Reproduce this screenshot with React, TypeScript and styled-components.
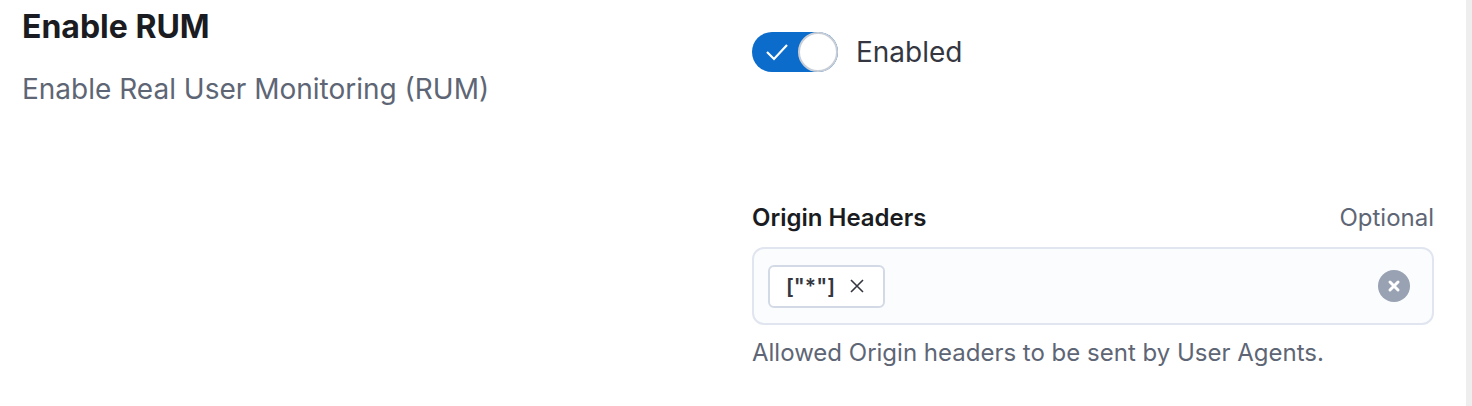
import React from 'react';
import styled, { createGlobalStyle } from 'styled-components';

const GlobalStyle = createGlobalStyle`
  html, body {
    margin: 0;
    padding: 0;
    background: #ffffff;
  }
  body {
    font-family: Inter, "Noto Sans", "Liberation Sans", sans-serif;
    -webkit-font-smoothing: antialiased;
  }
`;

const Page = styled.div`
  width: 1472px;
  height: 406px;
  box-sizing: border-box;
  border-right: 6px solid #eeeeee;
  padding: 0 32px 0 22px;
  display: grid;
  grid-template-columns: 730px 1fr;
`;

const Description = styled.div`
  display: flex;
  flex-direction: column;
  padding-top: 7px;
`;

const Title = styled.h3`
  margin: 0;
  font-size: 32px;
  line-height: 40px;
  font-weight: 700;
  color: #1a1c21;
`;

const Subtitle = styled.p`
  margin: 24px 0 0;
  font-size: 28px;
  line-height: 36px;
  font-weight: 400;
  color: #5e6675;
`;

const Fields = styled.div`
  display: flex;
  flex-direction: column;
  padding-top: 32px;
`;

const SwitchRow = styled.label`
  display: flex;
  align-items: center;
  gap: 18px;
  height: 40px;
`;

const Track = styled.span<{ $on: boolean }>`
  position: relative;
  display: inline-flex;
  align-items: center;
  width: 86px;
  height: 40px;
  border-radius: 20px;
  background: ${p => (p.$on ? '#0b6ccb' : '#d3dae6')};
`;

const Knob = styled.span<{ $on: boolean }>`
  position: absolute;
  top: 0;
  left: ${p => (p.$on ? '46px' : '0')};
  width: 40px;
  height: 40px;
  box-sizing: border-box;
  border-radius: 50%;
  background: #ffffff;
  border: 2px solid #c9ced6;
`;

const Check = styled.svg`
  margin-left: 13px;
`;

const SwitchLabel = styled.span`
  font-size: 28px;
  line-height: 36px;
  color: #343741;
`;

const LabelRow = styled.div`
  display: flex;
  justify-content: space-between;
  align-items: baseline;
  margin-top: 132px;
  line-height: 28px;
`;

const FieldLabel = styled.span`
  font-size: 24px;
  font-weight: 600;
  color: #1a1c21;
`;

const Optional = styled.span`
  font-size: 24px;
  color: #5e6675;
`;

const Combo = styled.div`
  margin-top: 15px;
  height: 78px;
  box-sizing: border-box;
  border: 2px solid #e0e5ef;
  border-radius: 12px;
  background: #fbfcfd;
  display: flex;
  align-items: center;
  padding: 0 22px 0 14px;
`;

const Pill = styled.span`
  display: inline-flex;
  align-items: center;
  gap: 14px;
  height: 43px;
  box-sizing: border-box;
  padding: 0 18px 0 16px;
  border: 2px solid #d3dae6;
  border-radius: 6px;
  background: #ffffff;
  font-size: 21px;
  font-weight: 600;
  color: #343741;
`;

const Spacer = styled.span`
  flex: 1;
`;

const ClearButton = styled.span`
  display: inline-flex;
  align-items: center;
  justify-content: center;
  width: 32px;
  height: 32px;
  border-radius: 50%;
  background: #98a2b3;
`;

const HelpText = styled.div`
  margin-top: 14px;
  font-size: 24px;
  line-height: 28px;
  color: #5e6675;
`;

export default function App() {
  const on = true;
  return (
    <>
      <GlobalStyle />
      <Page>
        <Description>
          <Title>Enable RUM</Title>
          <Subtitle>Enable Real User Monitoring (RUM)</Subtitle>
        </Description>
        <Fields>
          <SwitchRow>
            <Track $on={on}>
              <Check width="24" height="18" viewBox="0 0 24 18">
                <path d="M2 9 L9 16 L22 2" fill="none" stroke="#ffffff" strokeWidth="2.2" />
              </Check>
              <Knob $on={on} />
            </Track>
            <SwitchLabel>Enabled</SwitchLabel>
          </SwitchRow>
          <LabelRow>
            <FieldLabel>Origin Headers</FieldLabel>
            <Optional>Optional</Optional>
          </LabelRow>
          <Combo>
            <Pill>
              ["*"]
              <svg width="16" height="16" viewBox="0 0 16 16">
                <path d="M2 2 L14 14 M14 2 L2 14" stroke="#343741" strokeWidth="1.6" />
              </svg>
            </Pill>
            <Spacer />
            <ClearButton>
              <svg width="14" height="14" viewBox="0 0 14 14">
                <path d="M3 3 L11 11 M11 3 L3 11" stroke="#ffffff" strokeWidth="3" strokeLinecap="round" />
              </svg>
            </ClearButton>
          </Combo>
          <HelpText>Allowed Origin headers to be sent by User Agents.</HelpText>
        </Fields>
      </Page>
    </>
  );
}
